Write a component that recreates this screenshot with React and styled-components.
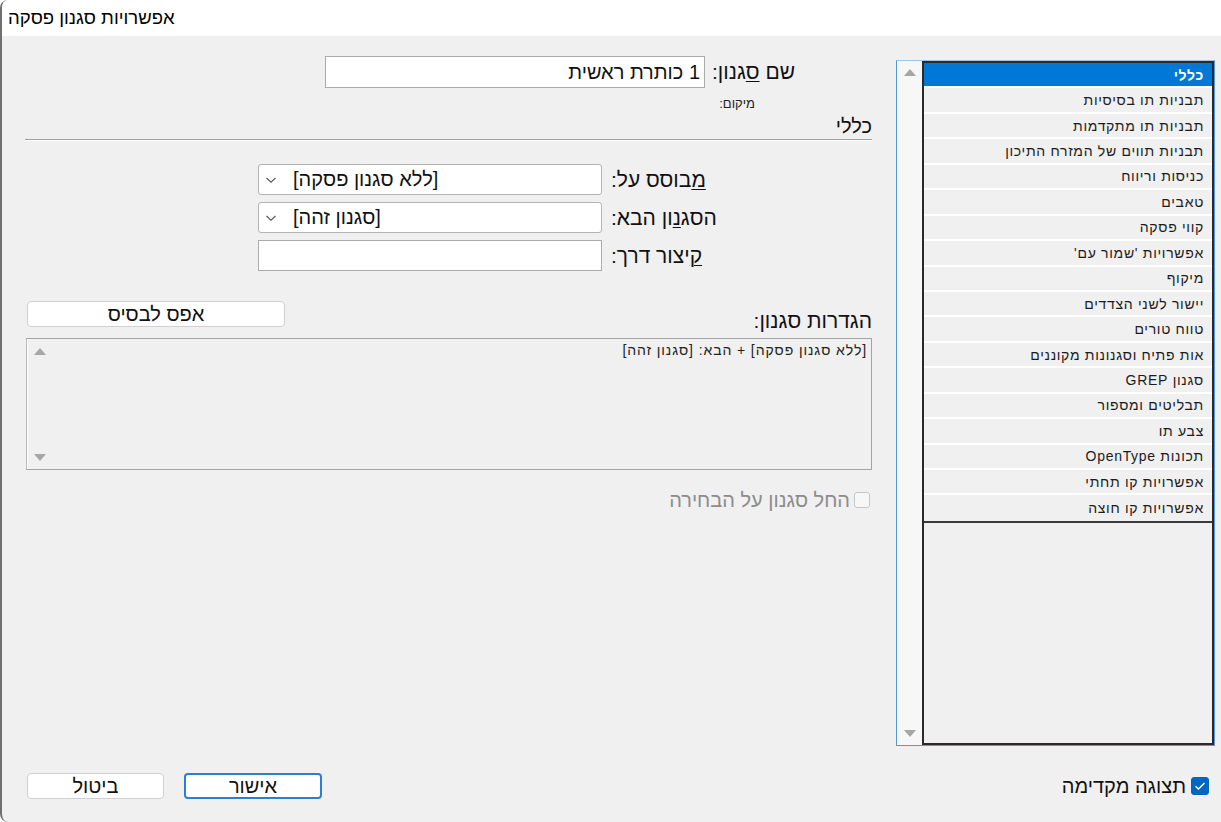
import React from "react";
import styled, { createGlobalStyle } from "styled-components";

const Global = createGlobalStyle`
  html, body { margin: 0; padding: 0; background: #ffffff; }
  body { font-family: "Liberation Sans", "DejaVu Sans", sans-serif; color: #1a1a1a; }
  * { box-sizing: border-box; }
`;

const Window = styled.div`
  width: 1221px;
  height: 822px;
  display: flex;
  flex-direction: column;
  border-left: 2px solid #707070;
  border-radius: 8px 0 0 8px;
  overflow: hidden;
  background: #f0f0f0;
`;

const TitleBar = styled.div`
  height: 36px;
  background: #ffffff;
  display: flex;
  align-items: center;
  padding-left: 6px;
  font-size: 18.5px;
  color: #000;
`;

const Body = styled.div`
  flex: 1;
  direction: rtl;
  display: flex;
  flex-direction: column;
  padding: 20px 6px 0 23px;
`;

const Main = styled.div`
  display: flex;
  gap: 23px;
  height: 690px;
`;

const Sidebar = styled.div`
  width: 319px;
  margin-top: 4px;
  height: 686px;
  border: 1px solid #4f9be3;
  border-top-color: #9ec4e8;
  display: flex;
`;

const ListBox = styled.div`
  flex: 1;
  border: 2px solid #2a2a2a;
  background: #f0f0f0;
  display: flex;
  flex-direction: column;
`;

const Items = styled.div`
  border-bottom: 2px solid #3a3a3a;
`;

const Item = styled.div`
  height: 25.45px;
  display: flex;
  align-items: center;
  padding: 0 8px 0 0;
  font-size: 14px;
  letter-spacing: 0.7px;
  border-bottom: 2px solid #ffffff;
  background: ${(p) => (p.$selected ? "#0078d7" : "#f0f0f0")};
  color: ${(p) => (p.$selected ? "#ffffff" : "#1c1c1c")};
  font-weight: ${(p) => (p.$selected ? 700 : 400)};
  &:last-child { border-bottom: none; }
`;

const ScrollCol = styled.div`
  width: 25px;
  background: ${(p) => p.$bg || "#f7f7f7"};
  border-left: 1px solid #ffffff;
  display: flex;
  flex-direction: column;
  justify-content: space-between;
  align-items: center;
  padding: ${(p) => p.$pad || "8px 0 8px 0"};
`;

const Tri = styled.div`
  width: 0;
  height: 0;
  border-left: 6px solid transparent;
  border-right: 6px solid transparent;
  ${(p) =>
    p.$down
      ? "border-top: 7px solid #a6a6a6;"
      : "border-bottom: 7px solid #a6a6a6;"}
`;

const Form = styled.div`
  flex: 1;
  display: flex;
  flex-direction: column;
  padding-right: 1px;
`;

const FieldRow = styled.div`
  display: flex;
  justify-content: flex-end;
  align-items: center;
  gap: ${(p) => p.$gap || 8}px;
  padding-left: ${(p) => p.$left}px;
  margin-top: ${(p) => p.$top || 0}px;
`;

const Label = styled.label`
  font-size: 21px;
  line-height: 22px;
  color: #111;
  white-space: nowrap;
  margin-top: ${(p) => p.$top || 0}px;
  u { text-decoration: underline; text-underline-offset: 2px; text-decoration-thickness: 1px; }
`;

const TextInput = styled.div`
  width: ${(p) => p.$w}px;
  height: ${(p) => p.$h || 32}px;
  background: #ffffff;
  border: 1px solid #ababab;
  display: flex;
  align-items: center;
  padding: 0 4px;
  font-size: 20px;
  color: #111;
`;

const Select = styled.div`
  width: 344px;
  height: 31px;
  background: #ffffff;
  border: 1px solid #b3b3b3;
  border-radius: 3px;
  direction: ltr;
  display: flex;
  align-items: center;
  padding-left: 6px;
  gap: 16px;
  font-size: 20px;
  color: #111;
`;

const SelectText = styled.span`
  direction: rtl;
`;

const SmallLabel = styled.div`
  font-size: 13px;
  line-height: 14px;
  margin-top: 9px;
  padding-right: 117px;
  color: #222;
`;

const SectionHead = styled.div`
  font-size: 20px;
  line-height: 20px;
  margin-top: 5px;
  color: #111;
`;

const Separator = styled.div`
  height: 2px;
  margin-top: 3px;
  border-top: 1px solid #a0a0a0;
  border-bottom: 1px solid #ffffff;
`;

const DefsRow = styled.div`
  display: flex;
  justify-content: space-between;
  align-items: flex-start;
  margin-top: 30px;
`;

const Button = styled.button`
  width: ${(p) => p.$w}px;
  height: 26px;
  background: #ffffff;
  border: ${(p) => (p.$primary ? "2px solid #2a7fd5" : "1px solid #d0d0d0")};
  border-radius: 4px;
  font-family: inherit;
  font-size: 20px;
  line-height: 1;
  color: #111;
  padding: 0;
  direction: rtl;
  margin-left: ${(p) => p.$ml || 0}px;
`;

const DefsBox = styled.div`
  margin-top: 6px;
  margin-left: 1px;
  height: 132px;
  border: 1px solid #a3a3a3;
  border-left-color: #b8b8b8;
  display: flex;
  background: #f0f0f0;
`;

const DefsText = styled.div`
  flex: 1;
  font-size: 14px;
  letter-spacing: 0.9px;
  padding: 3px 4px 0 0;
  color: #222;
`;

const CheckRow = styled.div`
  display: flex;
  align-items: center;
  gap: ${(p) => p.$gap || 4}px;
  margin-top: ${(p) => p.$top || 0}px;
  margin-right: ${(p) => p.$right || 0}px;
  font-size: 20px;
  line-height: 22px;
  color: ${(p) => (p.$disabled ? "#8c8c8c" : "#111")};
`;

const Box = styled.span`
  width: ${(p) => p.$size}px;
  height: ${(p) => p.$size}px;
  border-radius: 3px;
  display: inline-flex;
  align-items: center;
  justify-content: center;
  background: ${(p) => (p.$checked ? "#0067c0" : "#f7f7f7")};
  border: 1px solid ${(p) => (p.$checked ? "#0067c0" : "#c6c6c6")};
`;

const Footer = styled.div`
  margin-top: 27px;
  display: flex;
  justify-content: space-between;
  align-items: center;
`;

const ButtonGroup = styled.div`
  display: flex;
  gap: 20px;
  margin-left: 2px;
`;

const Chevron = () => (
  <svg width="12" height="8" viewBox="0 0 12 8">
    <path d="M1.5 2 L6 6.2 L10.5 2" fill="none" stroke="#5a5a5a" strokeWidth="1.2" />
  </svg>
);

const Check = () => (
  <svg width="12" height="10" viewBox="0 0 12 10">
    <path d="M1.5 5.2 L4.5 8 L10.5 2" fill="none" stroke="#ffffff" strokeWidth="1.4" />
  </svg>
);

const items = [
  "כללי",
  "תבניות תו בסיסיות",
  "תבניות תו מתקדמות",
  "תבניות תווים של המזרח התיכון",
  "כניסות וריווח",
  "טאבים",
  "קווי פסקה",
  "אפשרויות 'שמור עם'",
  "מיקוף",
  "יישור לשני הצדדים",
  "טווח טורים",
  "אות פתיח וסגנונות מקוננים",
  "סגנון GREP",
  "תבליטים ומספור",
  "צבע תו",
  "תכונות OpenType",
  "אפשרויות קו תחתי",
  "אפשרויות קו חוצה",
];

export default function App() {
  return (
    <>
      <Global />
      <Window>
        <TitleBar>
          <span dir="rtl">אפשרויות סגנון פסקה</span>
        </TitleBar>
        <Body>
          <Main>
            <Sidebar>
              <ListBox>
                <Items>
                  {items.map((t, i) => (
                    <Item key={t} $selected={i === 0}>
                      {t}
                    </Item>
                  ))}
                </Items>
              </ListBox>
              <ScrollCol $pad="8px 0 8px 0">
                <Tri />
                <Tri $down />
              </ScrollCol>
            </Sidebar>
            <Form>
              <FieldRow $left={300} $gap={7}>
                <Label>
                  שם <u>ס</u>גנון:
                </Label>
                <TextInput $w={380}>1 כותרת ראשית</TextInput>
              </FieldRow>
              <SmallLabel>מיקום:</SmallLabel>
              <SectionHead>כללי</SectionHead>
              <Separator />
              <FieldRow $left={233} $gap={9} $top={23}>
                <Label>
                  <u>מ</u>בוסס על:
                </Label>
                <Select>
                  <Chevron />
                  <SelectText>[ללא סגנון פסקה]</SelectText>
                </Select>
              </FieldRow>
              <FieldRow $left={233} $gap={9} $top={7}>
                <Label>
                  הסג<u>נ</u>ון הבא:
                </Label>
                <Select>
                  <Chevron />
                  <SelectText>[סגנון זהה]</SelectText>
                </Select>
              </FieldRow>
              <FieldRow $left={233} $gap={9} $top={7}>
                <Label>
                  <u>ק</u>יצור דרך:
                </Label>
                <TextInput $w={344} $h={31} />
              </FieldRow>
              <DefsRow>
                <Label $top={9}>הגדרות סגנון:</Label>
                <Button $w={258} $ml={2}>אפס לבסיס</Button>
              </DefsRow>
              <DefsBox>
                <DefsText>[ללא סגנון פסקה] + הבא: [סגנון זהה]</DefsText>
                <ScrollCol $pad="9px 0 8px 0" $bg="transparent">
                  <Tri />
                  <Tri $down />
                </ScrollCol>
              </DefsBox>
              <CheckRow $disabled $top={19} $right={2}>
                <Box $size={16} />
                <span>החל סגנון על הבחירה</span>
              </CheckRow>
            </Form>
          </Main>
          <Footer>
            <CheckRow $right={6} $gap={5}>
              <Box $size={18} $checked>
                <Check />
              </Box>
              <span>תצוגה מקדימה</span>
            </CheckRow>
            <ButtonGroup>
              <Button $w={138} $primary>אישור</Button>
              <Button $w={137}>ביטול</Button>
            </ButtonGroup>
          </Footer>
        </Body>
      </Window>
    </>
  );
}
